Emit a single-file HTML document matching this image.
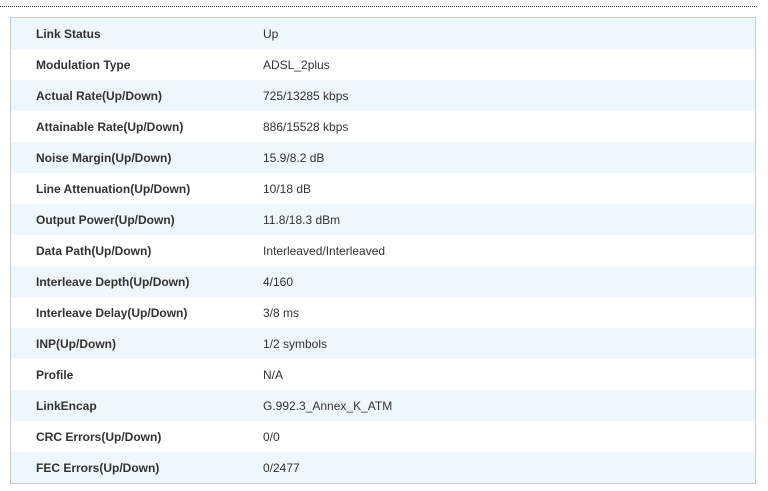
<!DOCTYPE html>
<html><head><style>
body{margin:0;background:#fff;font-family:"Liberation Sans",Arial,sans-serif;font-size:12px;color:#333;}
.dot{position:absolute;left:0;top:6px;width:757px;border-top:1px dotted #333;}
.box{position:absolute;left:10px;top:17px;width:744px;border:1px solid #ccc;}
.row{height:31px;line-height:33px;position:relative;}
.row:nth-child(odd){background:#eef6fe;}
.l{position:absolute;left:25px;font-weight:bold;}
.v{position:absolute;left:252px;}
</style></head><body>
<div class="dot"></div>
<div class="box">
<div class="row"><span class="l">Link Status</span><span class="v">Up</span></div>
<div class="row"><span class="l">Modulation Type</span><span class="v">ADSL_2plus</span></div>
<div class="row"><span class="l">Actual Rate(Up/Down)</span><span class="v">725/13285 kbps</span></div>
<div class="row"><span class="l">Attainable Rate(Up/Down)</span><span class="v">886/15528 kbps</span></div>
<div class="row"><span class="l">Noise Margin(Up/Down)</span><span class="v">15.9/8.2 dB</span></div>
<div class="row"><span class="l">Line Attenuation(Up/Down)</span><span class="v">10/18 dB</span></div>
<div class="row"><span class="l">Output Power(Up/Down)</span><span class="v">11.8/18.3 dBm</span></div>
<div class="row"><span class="l">Data Path(Up/Down)</span><span class="v">Interleaved/Interleaved</span></div>
<div class="row"><span class="l">Interleave Depth(Up/Down)</span><span class="v">4/160</span></div>
<div class="row"><span class="l">Interleave Delay(Up/Down)</span><span class="v">3/8 ms</span></div>
<div class="row"><span class="l">INP(Up/Down)</span><span class="v">1/2 symbols</span></div>
<div class="row"><span class="l">Profile</span><span class="v">N/A</span></div>
<div class="row"><span class="l">LinkEncap</span><span class="v">G.992.3_Annex_K_ATM</span></div>
<div class="row"><span class="l">CRC Errors(Up/Down)</span><span class="v">0/0</span></div>
<div class="row"><span class="l">FEC Errors(Up/Down)</span><span class="v">0/2477</span></div>
</div>
</body></html>
